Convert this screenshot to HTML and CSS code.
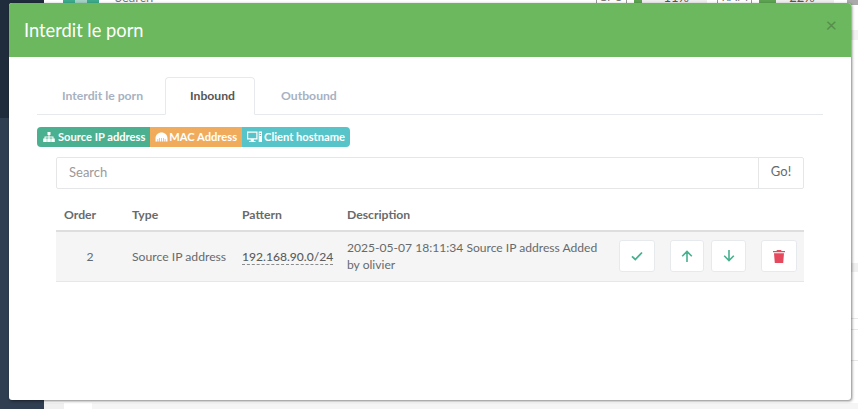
FILE: index.html
```html
<!DOCTYPE html>
<html lang="fr">
<head>
<meta charset="utf-8">
<title>Interdit le porn</title>
<link rel="stylesheet" href="styles.css">
</head>
<body>
<div class="backdrop">
  <div class="bg-side"><div class="bg-side-top"></div></div>
  <div class="bg-main">
    <div class="bg-top">
      <span class="bg-logo"><span class="bg-logo-mid"></span></span>
      <span class="bg-search">Search</span>
      <span class="bg-stat bg-cpu">CPU</span><span class="bg-bar"><span class="bg-fill bg-fill-cpu"></span><span class="bg-val">11%</span></span>
      <span class="bg-stat bg-ram">RAM</span><span class="bg-bar bg-bar-ram"><span class="bg-fill bg-fill-ram"></span><span class="bg-val">22%</span></span>
      <span class="bg-end"></span>
    </div>
    <div class="bg-band-a"></div>
    <div class="bg-gap-b"></div>
    <div class="bg-band-b"></div>
    <div class="bg-gap-c"></div>
    <div class="bg-line"></div>
    <div class="bg-gap-d"></div>
    <div class="bg-line"></div>
    <div class="bg-gap-e"></div>
    <div class="bg-line"></div>
    <div class="bg-gap-f"></div>
    <div class="bg-foot"><span class="foot-a"></span><span class="foot-b"></span><span class="foot-c"></span></div>
  </div>
</div>
<div class="modal">
  <header class="modal-head">
    <h4 class="modal-title">Interdit le porn</h4>
    <span class="modal-close">×</span>
  </header>
  <div class="modal-body">
    <nav class="tabs">
      <a class="tab">Interdit le porn</a>
      <a class="tab tab-active">Inbound</a>
      <a class="tab tab-last">Outbound</a>
    </nav>
    <div class="labels">
      <span class="label label-green">
        <svg class="ico" viewBox="0 0 12 10" width="12" height="10"><path fill="#fff" d="M4.500 0h3v3H6.500v1.500H10.500V6.500H11.800V10H8.200V6.500H9.500V5.500H6.500V6.500H7.800V10H4.200V6.500H5.500V5.500H2.500V6.500H3.800V10H.2V6.500H1.500V4.500H5.500V3H4.500z"/></svg>
        Source IP address</span>
      <span class="label label-orange">
        <svg class="ico" viewBox="0 0 13 10" width="13" height="10"><path fill="#fff" fill-rule="evenodd" d="M6.500 .5C3 .5.500 3 .5 6.500V9.500h12V6.500C12.500 3 10 .5 6.500 .5zM2.500 7v2.500h.7V7zM4.300 6v3.500h.7V6zM6.150 6v3.500h.7V6zM8 6v3.500h.7V6zM9.800 7v2.500h.7V7z"/></svg>
        MAC Address</span>
      <span class="label label-teal">
        <svg class="ico" viewBox="0 0 15 11" width="15" height="11"><path fill="#fff" fill-rule="evenodd" d="M0 .5h10.500v8H6.800V10h1.700v1H2v-1h1.700V8.500H0zM1.200 1.700v5.600h8.100V1.700zM11.700 .5H15V11h-3.300zM12.500 2v1h1.700V2zM12.500 4v1h1.700V4z"/></svg>
        Client hostname</span>
    </div>
    <div class="inner">
      <div class="search">
        <div class="search-input">Search</div>
        <div class="search-btn">Go!</div>
      </div>
      <table class="rules">
        <thead>
          <tr><th class="c-order">Order</th><th class="c-type">Type</th><th class="c-pattern">Pattern</th><th>Description</th><th class="c-actions"></th></tr>
        </thead>
        <tbody>
          <tr>
            <td class="num">2</td>
            <td class="type">Source IP address</td>
            <td><a class="pattern">192.168.90.0/24</a></td>
            <td class="desc">2025-05-07 18:11:34 Source IP address Added by olivier</td>
            <td>
              <div class="actions">
                <button class="btn btn-check"><svg viewBox="0 0 12 10" width="12" height="10"><path d="M1 5.300 4.300 8.500 11 1.500" fill="none" stroke="#48b08e" stroke-width="1.800"/></svg></button>
                <button class="btn btn-up"><svg viewBox="0 0 12 12" width="12" height="12"><path d="M6 12V1.500M1.200 6.300 6 1.500l4.800 4.800" fill="none" stroke="#48b08e" stroke-width="1.600"/></svg></button>
                <button class="btn btn-down"><svg viewBox="0 0 12 12" width="12" height="12"><path d="M6 0v10.500M1.200 5.700 6 10.500l4.800-4.800" fill="none" stroke="#48b08e" stroke-width="1.600"/></svg></button>
                <button class="btn btn-trash"><svg viewBox="0 0 12 13" width="12" height="13"><path fill="#e5495e" d="M4 0h4l.6 1H12v1.300H0V1h3.400zM1 3.200h10l-.8 9.800H1.800z"/></svg></button>
              </div>
            </td>
          </tr>
        </tbody>
      </table>
    </div>
  </div>
</div>
</body>
</html>
```
FILE: styles.css
```css
* { box-sizing: border-box; }
html, body { margin: 0; padding: 0; height: 100%; overflow: hidden; }
body { font-family: Lato, "Open Sans", sans-serif; font-size: 13px; color: #676a6c; background: #fff; }

.backdrop { display: flex; height: 409px; }
.bg-side { width: 44px; background: #2f3e50; }
.bg-side-top { height: 118px; background: #1f2c3b; }
.bg-main { flex: 1; display: flex; flex-direction: column; background: #fff; overflow: hidden; }
.bg-top { display: flex; align-items: flex-start; height: 57px; flex: none; margin-top: -27px; padding: 16px 0 0 19px; font-size: 13px; line-height: 16px; color: #777; }
.bg-logo { width: 36px; height: 16px; background: #3dab8b; display: flex; justify-content: center; }
.bg-logo-mid { width: 12px; background: #a3d2c4; }
.bg-search { margin-left: 16px; width: 482px; }
.bg-stat { width: 31px; height: 16px; border: 1px solid #999; border-width: 0 1px; text-align: center; font-size: 12px; margin-right: 7px; }
.bg-ram { width: 35px; }
.bg-bar { width: 74px; height: 16px; background: #eee; display: flex; margin-right: 10px; position: relative; }
.bg-bar-ram { width: 75px; margin-right: 13px; }
.bg-fill { height: 16px; background: #5ba350; }
.bg-fill-cpu { width: 8px; }
.bg-fill-ram { width: 17px; }
.bg-val { position: absolute; left: 30px; color: #555; }
.bg-end { width: 11px; height: 16px; background: #aaa; }
.bg-band-a { height: 10px; background: #f3f3f3; flex: none; }
.bg-gap-b { height: 223px; flex: none; }
.bg-band-b { height: 9px; background: #f0f0f0; flex: none; }
.bg-gap-c { height: 46px; flex: none; }
.bg-line { height: 1px; background: #e7e7e7; flex: none; }
.bg-gap-d { height: 10px; flex: none; }
.bg-gap-e { height: 30px; flex: none; }
.bg-gap-f { height: 42px; flex: none; }
.bg-foot { flex: 1; display: flex; }
.foot-a { width: 20px; background: #f0f0f0; }
.foot-b { width: 28px; background: #fff; }
.foot-c { flex: 1; background: #f5f5f5; }

.modal { position: absolute; left: 9px; top: 3px; width: 842px; height: 397px; background: #fff; border-radius: 3px; box-shadow: 1px 1px 3px rgba(0,0,0,.5); overflow: hidden; }
.modal-head { height: 54px; background: #6cb85e; position: relative; padding: 0 15px; display: flex; align-items: center; }
.modal-title { margin: 0; font-size: 18.3px; font-weight: 400; color: #fff; line-height: 26px; }
.modal-close { position: absolute; right: 14px; top: 9px; font-size: 20px; line-height: 24px; font-weight: 400; color: #568f4b; }

.modal-body { padding: 20px 28px 0; }
.tabs { display: flex; height: 38px; border-bottom: 1px solid #e7eaec; }
.tab { padding: 0 22px 0 25px; line-height: 38px; font-size: 12.2px; font-weight: 700; color: #a7b1c2; }
.tab-active { height: 38px; line-height: 36px; color: #555; background: #fff; border: 1px solid #e7eaec; border-bottom-color: #fff; border-radius: 4px 4px 0 0; padding: 0 19px 0 24px; }
.tab-last { padding-left: 26px; }
.labels { display: flex; margin-top: 12px; height: 20px; width: 313px; }
.label { display: flex; align-items: center; gap: 3px; padding: 0 5px 1px 6px; font-size: 11.15px; font-weight: 700; color: #fff; white-space: nowrap; }
.label-green { background: #4bb08f; border-radius: 4px 0 0 4px; }
.label-orange { background: #f0ac5c; padding-left: 5px; gap: 1px; }
.label-teal { background: #57c4c9; border-radius: 0 4px 4px 0; padding-left: 5px; gap: 2px; }

.inner { padding: 0 19px; margin-top: 10px; }
.search { display: flex; height: 32px; border: 1px solid #e5e6e7; border-radius: 2px; }
.search-input { flex: 1; padding: 0 12px; line-height: 29px; font-size: 13px; color: #9a9a9a; }
.search-btn { width: 45px; border-left: 1px solid #e5e6e7; text-align: center; line-height: 27px; font-size: 13px; color: #676a6c; }

.rules { width: 100%; border-collapse: collapse; margin-top: 9px; table-layout: fixed; }
.rules th { text-align: left; height: 33px; font-size: 12.2px; font-weight: 700; color: #676a6c; padding: 0 8px; border-bottom: 2px solid #dedede; }
.rules td { height: 50px; font-size: 12.2px; padding: 0 8px; background: #f5f5f5; border-bottom: 1px solid #e7e7e7; line-height: 17px; }
.c-order { width: 68px; }
.c-type { width: 110px; }
.c-pattern { width: 105px; }
.c-actions { width: 193px; }
.rules .num { text-align: center; }
.rules .type { white-space: nowrap; }
.rules .desc { font-size: 12.1px; }
.pattern { font-size: 12.1px; font-weight: 500; color: #5a5d5f; border-bottom: 1px dashed #8a8c8e; white-space: nowrap; }
.actions { display: flex; }
.btn { flex: none; height: 32px; background: #fff; border: 1px solid #e7eaec; border-radius: 3px; padding: 0; display: flex; align-items: center; justify-content: center; }
.btn-check { width: 36px; }
.btn-up { width: 34px; margin-left: 15px; }
.btn-down { width: 35px; margin-left: 7px; }
.btn-trash { width: 36px; margin-left: 15px; }
```
